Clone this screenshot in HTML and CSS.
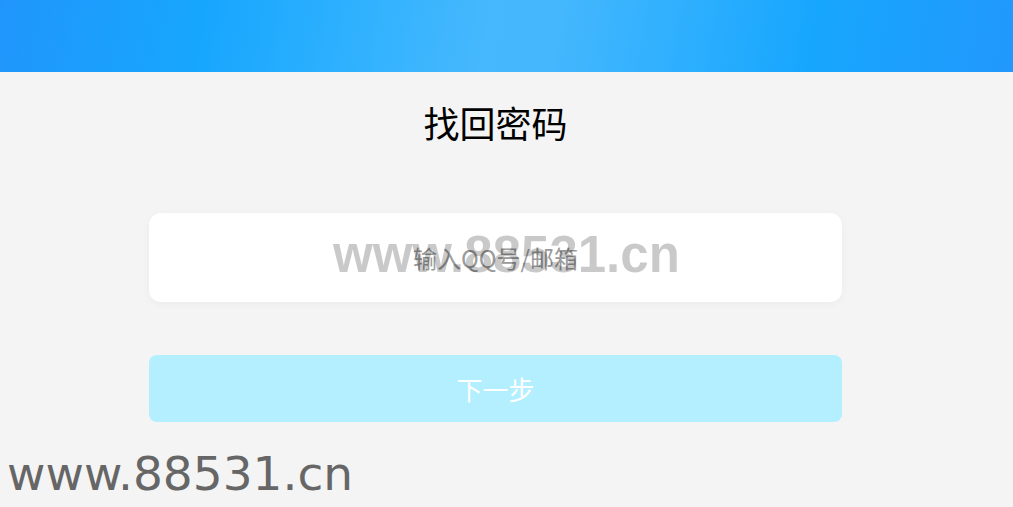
FILE: index.html
```html
<!DOCTYPE html>
<html lang="zh">
<head>
<meta charset="utf-8">
<title>找回密码</title>
<link rel="stylesheet" href="styles.css">
</head>
<body>
<header class="top-bar"></header>
<main class="page">
  <h1 class="title">找回密码</h1>
  <form class="form">
    <div class="field">
      <input class="field-input" type="text" placeholder="输入QQ号/邮箱">
      <span class="mark mark-field">www.88531.cn</span>
    </div>
    <button class="next-btn" type="button">下一步</button>
  </form>
</main>
<div class="mark mark-corner">www.88531.cn</div>
</body>
</html>
```
FILE: styles.css
```css
html, body {
  margin: 0;
  padding: 0;
  height: 100%;
}
body {
  background: #f4f4f4;
  font-family: "Noto Sans CJK SC", "Noto Sans", sans-serif;
  overflow: hidden;
  position: relative;
}
.top-bar {
  height: 72px;
  background: linear-gradient(100deg, #2096fb 0%, #17a6fe 20%, #2fb1fe 35%, #46b8fd 48%, #44b7fd 55%, #30b0fe 66%, #17a6fe 80%, #2198fc 100%);
}
.page {
  width: 991px;
  display: flex;
  flex-direction: column;
  align-items: center;
}
.title {
  margin: 32px 0 0;
  font-size: 36px;
  line-height: 36px;
  font-weight: 400;
  color: #000;
}
.form {
  margin-top: 73px;
  display: flex;
  flex-direction: column;
  gap: 53px;
  width: 693px;
}
.field {
  position: relative;
  height: 89px;
  background: #fff;
  border-radius: 12px;
  box-shadow: 0 2px 8px rgba(0,0,0,0.04);
}
.field-input {
  width: 100%;
  height: 100%;
  box-sizing: border-box;
  border: none;
  outline: none;
  background: transparent;
  text-align: center;
  font-family: "Noto Sans CJK SC", sans-serif;
  font-size: 24px;
  color: #333;
  padding: 0;
}
.field-input::placeholder {
  color: #9a9a9a;
}
.mark {
  pointer-events: none;
  white-space: nowrap;
}
.mark-field {
  position: absolute;
  left: 184px;
  top: 17px;
  font-family: "Liberation Sans", Arial, sans-serif;
  font-weight: 700;
  font-size: 51px;
  line-height: 50px;
  color: rgba(0,0,0,0.21);
}
.next-btn {
  height: 67px;
  border: none;
  border-radius: 8px;
  background: #b3efff;
  color: #fff;
  font-family: "Noto Sans CJK SC", sans-serif;
  font-size: 26px;
  padding: 0;
}
.mark-corner {
  position: absolute;
  left: 7px;
  top: 447px;
  font-family: "DejaVu Sans", Verdana, sans-serif;
  font-size: 47px;
  line-height: 54px;
  color: #666;
}
```
